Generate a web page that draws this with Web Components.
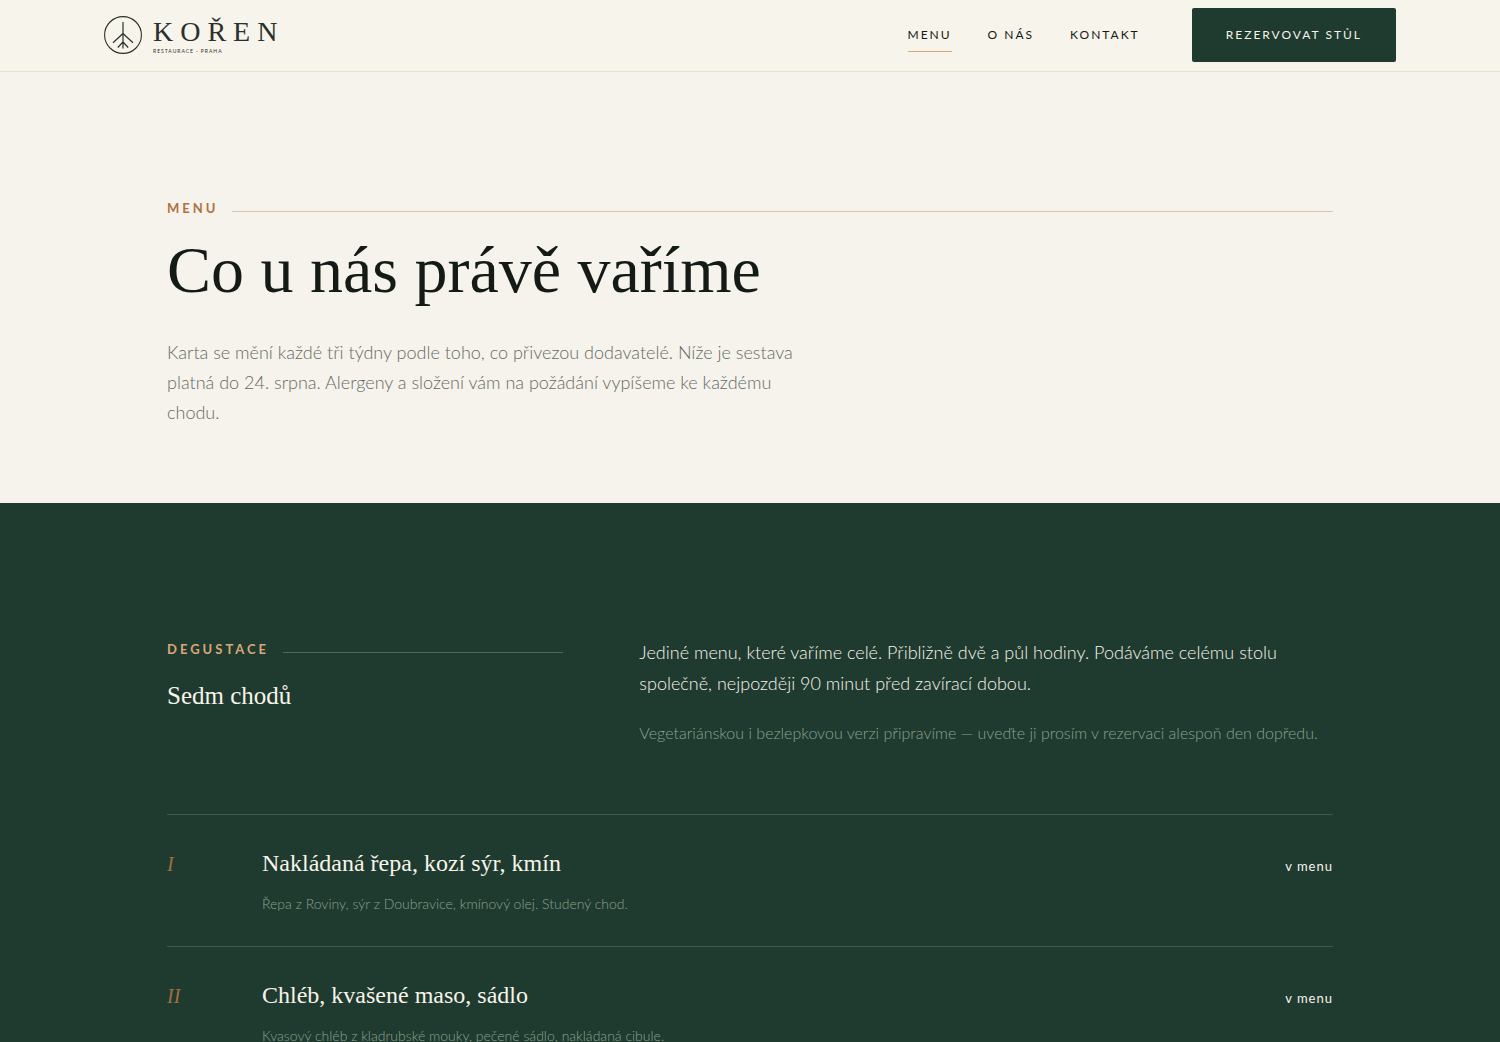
<!DOCTYPE html>
<html lang="cs">
<head>
<meta charset="utf-8">
<meta name="viewport" content="width=device-width, initial-scale=1">
<title>Kořen – Menu</title>
<style>
  :root {
    --cream: #f7f4eb;
    --paper: #f6f3ec;
    --forest: #1f3a2e;
    --ink: #141a16;
    --muted: #656a64;
    --sage: #8ca292;
    --copper: #b0713f;
    --sand: #d9a878;
    --serif: "Liberation Serif", serif;
    --sans: Lato, sans-serif;
  }
  body { margin: 0; background: var(--forest); color: var(--ink); font-family: var(--sans); }
</style>
</head>
<body>
<koren-header>
  <koren-logo slot="logo"></koren-logo>
  <koren-nav-link href="#menu" current>Menu</koren-nav-link>
  <koren-nav-link href="#o-nas">O nás</koren-nav-link>
  <koren-nav-link href="#kontakt">Kontakt</koren-nav-link>
  <koren-button slot="action">Rezervovat stůl</koren-button>
</koren-header>
<main>
  <koren-hero>
    <koren-eyebrow slot="eyebrow">Menu</koren-eyebrow>
    <span slot="title">Co u nás právě vaříme</span>
    Karta se mění každé tři týdny podle toho, co přivezou dodavatelé. Níže je sestava platná do 24. srpna. Alergeny a složení vám na požádání vypíšeme ke každému chodu.
  </koren-hero>
  <koren-tasting>
    <koren-eyebrow slot="eyebrow" tone="dark">Degustace</koren-eyebrow>
    <span slot="title">Sedm chodů</span>
    <span slot="lead">Jediné menu, které vaříme celé. Přibližně dvě a půl hodiny. Podáváme celému stolu společně, nejpozději 90 minut před zavírací dobou.</span>
    <span slot="note">Vegetariánskou i bezlepkovou verzi připravíme — uveďte ji prosím v rezervaci alespoň den dopředu.</span>
    <koren-course>
      <span slot="number">I</span><span slot="name">Nakládaná řepa, kozí sýr, kmín</span>
      <span slot="detail">Řepa z Roviny, sýr z Doubravice, kmínový olej. Studený chod.</span><span slot="price">v menu</span>
    </koren-course>
    <koren-course>
      <span slot="number">II</span><span slot="name">Chléb, kvašené maso, sádlo</span>
      <span slot="detail">Kvasový chléb z kladrubské mouky, pečené sádlo, nakládaná cibule.</span><span slot="price">v menu</span>
    </koren-course>
  </koren-tasting>
</main>
<script>
const define = (name, markup, setup) => {
  const template = document.createElement('template');
  template.innerHTML = markup;
  customElements.define(name, class extends HTMLElement {
    connectedCallback() {
      if (this.shadowRoot) return;
      this.attachShadow({ mode: 'open' }).append(template.content.cloneNode(true));
      if (setup) setup(this, this.shadowRoot);
    }
  });
};

define('koren-logo', `
  <style>
    :host { display: block; }
    a { display: flex; align-items: center; gap: 11px; color: #2a302c; text-decoration: none; }
    svg { display: block; width: 38px; height: 38px; fill: none; stroke: currentColor; }
    .words { display: flex; flex-direction: column; }
    .name { font: 28px/32px var(--serif); letter-spacing: 7px; }
    .place { font: 5px/6px var(--sans); letter-spacing: 1px; }
  </style>
  <a href="#">
    <svg viewBox="0 0 38 38" aria-hidden="true">
      <circle cx="19" cy="19" r="18.4" stroke-width="1.1"/>
      <path d="M19 6v26.500M19 17.500l-10 9.300M19 17.500l10 9.300M19 26l-5.200 5.500M19 26l5.200 5.500" stroke-width="1.200"/>
    </svg>
    <span class="words"><span class="name">KOŘEN</span><span class="place">RESTAURACE · PRAHA</span></span>
  </a>`);

define('koren-nav-link', `
  <style>
    :host { display: block; }
    a { display: block; padding: 8px 0 7px; border-bottom: 1px solid transparent; color: var(--ink);
        font: 12px/18px var(--sans); letter-spacing: 2px; text-transform: uppercase; text-decoration: none; }
    :host([current]) a { border-color: var(--sand); }
  </style>
  <a><slot></slot></a>`, (host, root) => {
    const link = root.querySelector('a');
    link.href = host.getAttribute('href');
    if (host.hasAttribute('current')) link.setAttribute('aria-current', 'page');
  });

define('koren-button', `
  <style>
    :host { display: block; }
    button { display: block; padding: 18px 34px; border: 0; border-radius: 2px; background: var(--forest);
             color: var(--cream); font: 12px/18px var(--sans); letter-spacing: 2px; text-transform: uppercase; cursor: pointer; }
  </style>
  <button type="button"><slot></slot></button>`);

define('koren-header', `
  <style>
    :host { display: block; background: var(--cream); border-bottom: 1px solid #e8dfd0; }
    header { display: flex; align-items: center; justify-content: space-between; max-width: 1292px; padding: 8px 0 9px; margin: 0 auto; }
    .right { display: flex; align-items: center; gap: 52px; }
    nav { display: flex; gap: 36px; }
  </style>
  <header>
    <slot name="logo"></slot>
    <div class="right"><nav aria-label="Hlavní"><slot></slot></nav><slot name="action"></slot></div>
  </header>`);

define('koren-eyebrow', `
  <style>
    :host { display: flex; align-items: flex-end; gap: 14px; color: var(--copper); --rule: #dcc5aa; }
    :host([tone="dark"]) { color: var(--sand); --rule: #4c6a52; }
    span { font: bold 13px/16px var(--sans); letter-spacing: 3px; text-transform: uppercase; }
    i { flex: 1; height: 1px; margin-bottom: 4px; background: var(--rule); }
  </style>
  <span><slot></slot></span><i></i>`);

define('koren-hero', `
  <style>
    :host { display: block; background: var(--paper); }
    .inner { max-width: 1166px; margin: 0 auto; padding: 128px 0 76px; }
    h1 { margin: 16px 0 29px; font: 400 66px/76px var(--serif); }
    p { max-width: 640px; margin: 0; color: var(--muted); font: 300 18px/30px var(--sans); }
  </style>
  <section class="inner" id="menu">
    <slot name="eyebrow"></slot>
    <h1><slot name="title"></slot></h1>
    <p><slot></slot></p>
  </section>`);

define('koren-tasting', `
  <style>
    :host { display: block; background: var(--forest); color: var(--cream); }
    .inner { max-width: 1166px; margin: 0 auto; padding: 134px 0; }
    .intro { display: grid; grid-template-columns: 4fr 7fr; gap: 76px; margin-bottom: 67px; }
    .heading { padding-top: 4px; }
    h2 { margin: 23px 0 0; font: 400 25px/32px var(--serif); }
    p { margin: 0; }
    .lead { font: 300 18px/31px var(--sans); }
    .note { margin-top: 20px; color: var(--sage); font: 300 16px/28px var(--sans); }
  </style>
  <section class="inner">
    <div class="intro">
      <div class="heading"><slot name="eyebrow"></slot><h2><slot name="title"></slot></h2></div>
      <div><p class="lead"><slot name="lead"></slot></p><p class="note"><slot name="note"></slot></p></div>
    </div>
    <slot></slot>
  </section>`);

define('koren-course', `
  <style>
    :host { display: block; border-top: 1px solid #3d5a4b; }
    article { display: grid; grid-template-columns: 71px 1fr auto; column-gap: 24px; align-items: baseline; padding: 30px 0; }
    .number { color: #a06f42; font: italic 20px/36px var(--serif); }
    h3 { margin: 0 0 11px; font: 400 24px/36px var(--serif); }
    p { margin: 0; color: var(--sage); font: 300 14px/24px var(--sans); }
    .price { font: 13px/36px var(--sans); letter-spacing: 1px; }
  </style>
  <article>
    <span class="number"><slot name="number"></slot></span>
    <div><h3><slot name="name"></slot></h3><p><slot name="detail"></slot></p></div>
    <span class="price"><slot name="price"></slot></span>
  </article>`);
</script>
</body>
</html>
